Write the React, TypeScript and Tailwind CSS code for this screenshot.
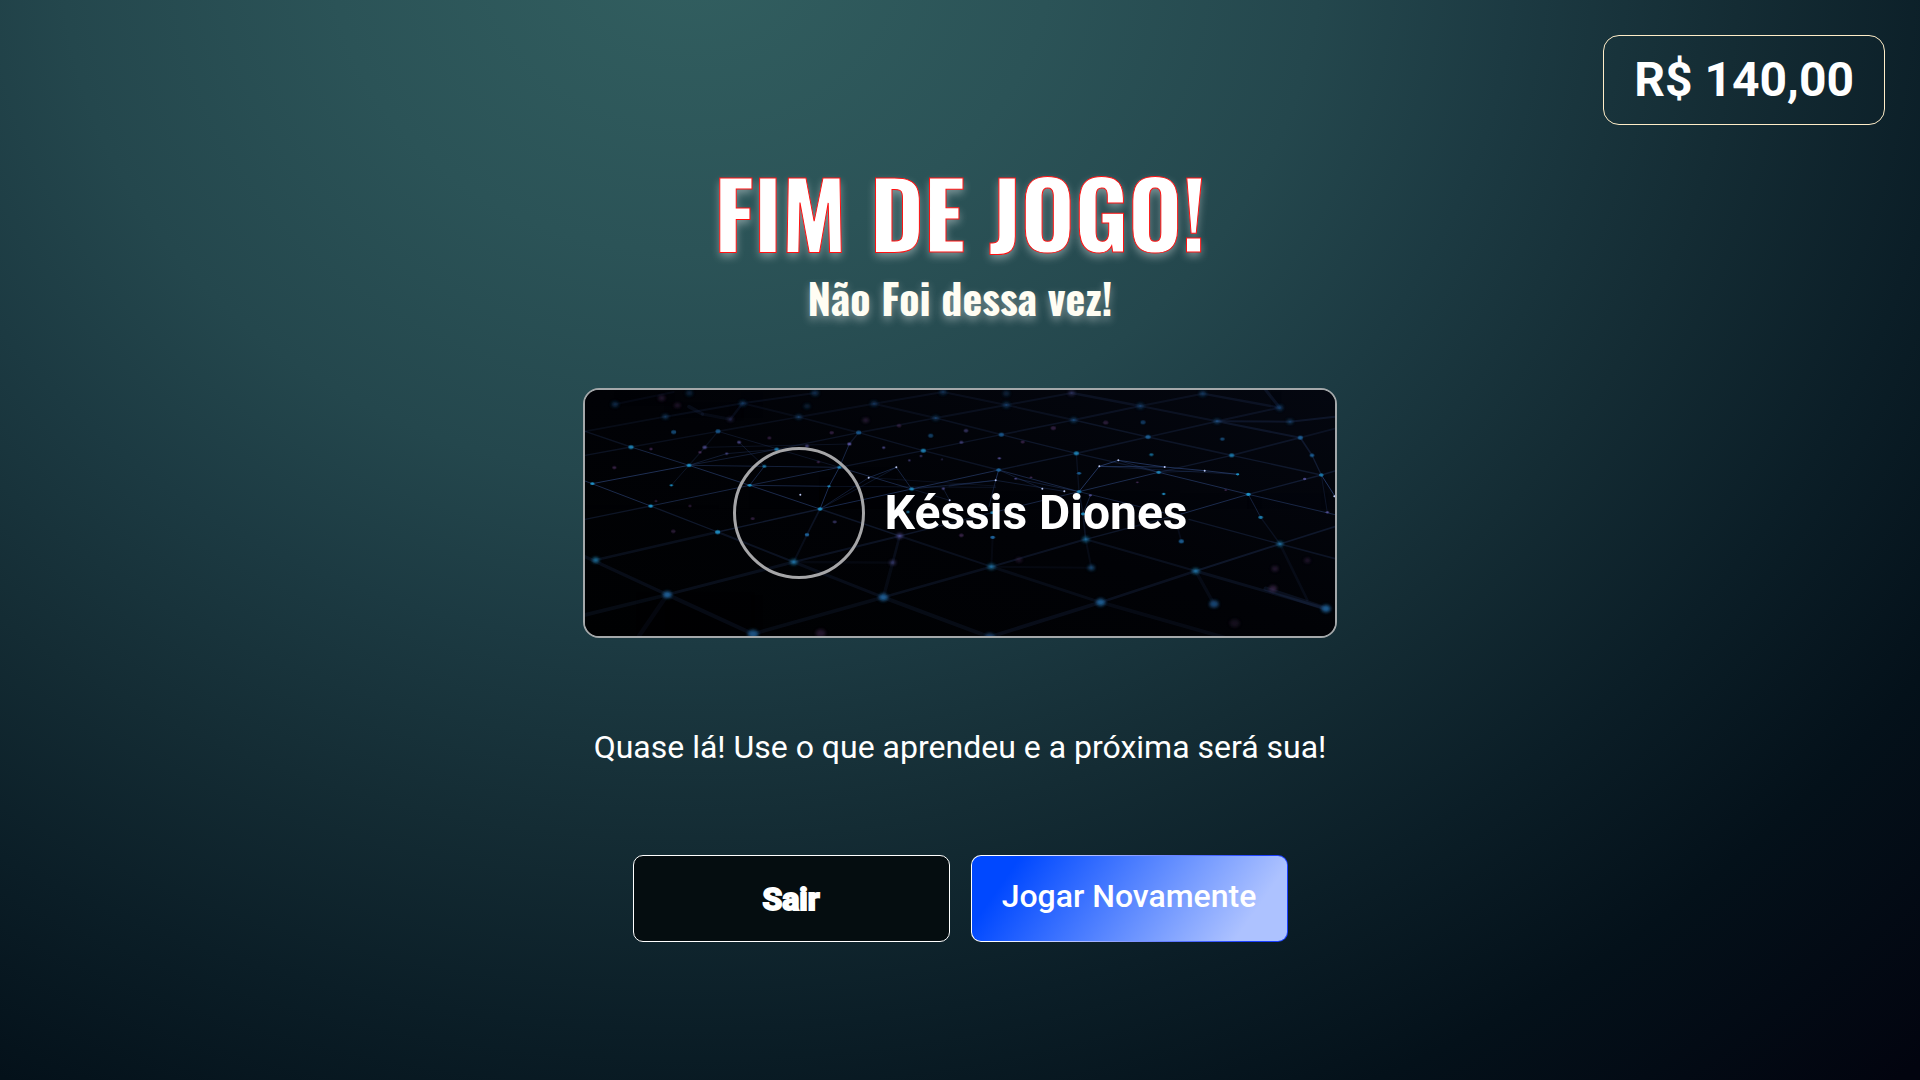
type Node = [x: number, y: number, r: number, color: string, opacity: number];
type Edge = [x1: number, y1: number, x2: number, y2: number, width: number, opacity: number];

const CYAN = "#1f8fc4";
const BLUE = "#1d5f96";
const DEEP = "#184a7a";
const VIOLET = "#5a55a0";
const PLUM = "#4a2f5c";

const nodes: Node[] = [
  [138, 103, 9, DEEP, 0.6], [361, 69, 9, DEEP, 0.5], [521, 100, 9, DEEP, 0.7], [738, 69, 10, DEEP, 0.6],
  [915, 101, 9, DEEP, 0.6], [1122, 66, 9, DEEP, 0.6], [714, 109, 8, DEEP, 0.5], [289, 140, 8, BLUE, 0.6],
  [689, 141, 8, BLUE, 0.6], [1100, 144, 8, BLUE, 0.6], [314, 186, 7, BLUE, 0.7], [447, 184, 7, BLUE, 0.8],
  [869, 188, 7, BLUE, 0.8], [1085, 197, 7, BLUE, 0.6], [186, 231, 7, CYAN, 0.8], [407, 232, 6, VIOLET, 0.7],
  [623, 238, 6, CYAN, 0.8], [1063, 242, 7, CYAN, 0.8], [360, 286, 6, CYAN, 1], [586, 289, 5, CYAN, 0.8],
  [811, 292, 5, CYAN, 0.9], [542, 346, 5, CYAN, 1], [307, 346, 4, CYAN, 0.9], [70, 341, 5, CYAN, 1],
  [780, 349, 4, CYAN, 0.9], [753, 417, 6, CYAN, 1], [1028, 357, 6, CYAN, 0.9], [245, 408, 6, CYAN, 1],
  [446, 486, 7, CYAN, 0.9], [714, 494, 6, BLUE, 1], [992, 498, 8, VIOLET, 0.9], [80, 570, 9, CYAN, 0.8],
  [674, 576, 9, CYAN, 0.8], [971, 578, 8, VIOLET, 0.6], [295, 674, 12, BLUE, 1], [943, 682, 13, BLUE, 1],
  [552, 792, 15, BLUE, 0.9], [755, 790, 14, PLUM, 0.5], [1017, 426, 4, CYAN, 0.8],
  [1312, 105, 9, DEEP, 0.7], [1312, 70, 9, DEEP, 0.5], [1508, 69, 9, VIOLET, 0.4], [1714, 108, 9, DEEP, 0.7],
  [1901, 71, 9, DEEP, 0.7], [2132, 113, 9, DEEP, 0.8], [1514, 150, 8, BLUE, 0.7], [1722, 157, 7, DEEP, 0.7],
  [1944, 154, 8, BLUE, 0.7], [2163, 155, 8, BLUE, 0.6], [1297, 194, 7, BLUE, 0.8], [1737, 201, 7, BLUE, 0.9],
  [1960, 207, 6, BLUE, 0.7], [2194, 203, 7, BLUE, 0.9], [1522, 250, 7, CYAN, 0.8], [1747, 254, 5, CYAN, 0.7],
  [1988, 256, 7, CYAN, 0.7], [2229, 256, 6, BLUE, 0.9], [1289, 300, 6, BLUE, 1], [1530, 310, 5, BLUE, 0.9],
  [1769, 307, 6, CYAN, 0.8], [2257, 315, 6, CYAN, 0.7], [1784, 372, 4, CYAN, 0.9], [2006, 313, 4, CYAN, 1],
  [1530, 365, 6, CYAN, 0.8], [2038, 373, 6, CYAN, 1], [2075, 442, 6, CYAN, 0.8], [1271, 502, 6, BLUE, 1],
  [1270, 428, 5, CYAN, 0.9], [1550, 508, 9, CYAN, 0.7], [1542, 432, 5, CYAN, 0.9], [1837, 514, 7, BLUE, 0.9],
  [2133, 522, 8, CYAN, 0.8], [1267, 590, 10, CYAN, 0.7], [1567, 593, 9, BLUE, 0.8], [1880, 603, 10, CYAN, 0.7],
  [1595, 697, 13, BLUE, 1], [1935, 702, 13, DEEP, 1], [2271, 716, 13, BLUE, 1], [1262, 801, 14, DEEP, 0.8],
  [484, 148, 8, VIOLET, 0.35], [278, 84, 9, PLUM, 0.5], [325, 106, 8, PLUM, 0.5], [246, 237, 4, PLUM, 0.9],
  [393, 247, 4, PLUM, 0.9], [473, 251, 4, VIOLET, 0.7], [510, 217, 5, VIOLET, 0.7], [601, 204, 5, PLUM, 0.6],
  [714, 228, 5, VIOLET, 0.6], [788, 188, 6, PLUM, 0.6], [890, 151, 8, PLUM, 0.6], [841, 222, 5, VIOLET, 1],
  [944, 233, 4, VIOLET, 0.8], [136, 293, 5, PLUM, 0.7], [261, 393, 3, PLUM, 0.8], [313, 484, 6, PLUM, 0.5],
  [551, 446, 5, PLUM, 0.6], [797, 456, 5, VIOLET, 0.5], [748, 276, 4, PLUM, 0.8], [990, 167, 6, PLUM, 0.5],
  [1021, 271, 3, VIOLET, 0.8], [1056, 258, 3, VIOLET, 0.7], [1119, 268, 2, VIOLET, 0.9], [1177, 217, 5, VIOLET, 0.6],
  [1191, 182, 6, VIOLET, 0.5], [1123, 356, 4, VIOLET, 0.8], [1177, 496, 6, PLUM, 0.7], [1291, 265, 4, VIOLET, 0.8],
  [1361, 216, 5, PLUM, 0.7], [1453, 174, 7, PLUM, 0.6], [1610, 158, 7, PLUM, 0.5], [1340, 326, 3, VIOLET, 0.8],
  [1386, 322, 3, PLUM, 0.9], [1564, 376, 4, VIOLET, 0.8], [1350, 570, 8, PLUM, 0.5], [1705, 337, 3, PLUM, 0.8],
  [1970, 360, 3, PLUM, 0.9], [2207, 327, 4, VIOLET, 0.8], [2275, 427, 4, VIOLET, 0.9], [2215, 571, 8, PLUM, 0.5],
  [2118, 596, 9, PLUM, 0.5], [2112, 656, 11, PLUM, 0.7], [1997, 760, 14, PLUM, 0.3], [363, 408, 4, PLUM, 0.6],
];

const sparks: [number, number][] = [
  [982, 292], [899, 323], [694, 374], [1280, 331], [1486, 364], [1591, 289], [1648, 271], [1787, 291],
  [1907, 302], [1142, 391], [1420, 356], [2296, 379],
];

const edges: Edge[] = [
  [48, 184, 186, 231, 3, 0.5], [186, 231, 360, 286, 2, 0.7], [360, 286, 542, 346, 2, 0.8], [542, 346, 753, 417, 2, 0.8],
  [753, 417, 992, 498, 3, 0.6], [992, 498, 1267, 590, 5, 0.4], [1267, 590, 1595, 697, 8, 0.3], [1595, 697, 2000, 812, 10, 0.25],
  [70, 341, 360, 286, 2, 0.9], [360, 286, 623, 238, 2, 0.5], [623, 238, 869, 188, 3, 0.5], [869, 188, 1100, 144, 4, 0.4],
  [1100, 144, 1312, 105, 5, 0.35], [1312, 105, 1508, 69, 5, 0.35],
  [48, 256, 186, 231, 3, 0.5], [186, 231, 447, 184, 3, 0.4], [447, 184, 689, 141, 4, 0.35], [689, 141, 915, 101, 5, 0.3],
  [915, 101, 1122, 66, 5, 0.3], [48, 184, 289, 140, 4, 0.3], [289, 140, 521, 100, 5, 0.3], [521, 100, 738, 69, 5, 0.3],
  [48, 333, 245, 408, 2, 0.8], [245, 408, 446, 486, 3, 0.7], [446, 486, 674, 576, 5, 0.5], [674, 576, 943, 682, 8, 0.35],
  [943, 682, 1262, 801, 11, 0.3], [48, 448, 245, 408, 3, 0.6], [245, 408, 542, 346, 2, 0.7], [542, 346, 811, 292, 2, 0.7],
  [811, 292, 1063, 242, 3, 0.6], [1063, 242, 1297, 194, 3, 0.5], [1297, 194, 1514, 150, 4, 0.45], [1514, 150, 1714, 108, 5, 0.4],
  [1714, 108, 1901, 71, 5, 0.35], [48, 560, 295, 674, 9, 0.35], [295, 674, 552, 792, 11, 0.3],
  [80, 570, 446, 486, 6, 0.4], [446, 486, 753, 417, 3, 0.7], [753, 417, 1028, 357, 2, 0.8], [1028, 357, 1289, 300, 2, 0.8],
  [1289, 300, 1522, 250, 3, 0.6], [1522, 250, 1737, 201, 4, 0.5], [1737, 201, 1944, 154, 4, 0.45], [1944, 154, 2132, 113, 5, 0.4],
  [48, 735, 295, 674, 10, 0.3], [295, 674, 674, 576, 8, 0.4], [674, 576, 992, 498, 5, 0.5], [992, 498, 1270, 428, 3, 0.6],
  [1270, 428, 1530, 365, 2, 0.7], [1530, 365, 1769, 307, 2, 0.8], [1769, 307, 1988, 256, 3, 0.6], [1988, 256, 2194, 203, 4, 0.5],
  [2194, 203, 2298, 176, 4, 0.4], [552, 792, 943, 682, 10, 0.3], [943, 682, 1267, 590, 7, 0.4], [1267, 590, 1550, 508, 5, 0.5],
  [1550, 508, 1837, 432, 3, 0.6], [1837, 432, 2038, 373, 2, 0.8], [2038, 373, 2257, 315, 3, 0.7], [2257, 315, 2298, 303, 3, 0.6],
  [1262, 801, 1595, 697, 10, 0.35], [1595, 697, 1880, 603, 7, 0.45], [1880, 603, 2133, 522, 5, 0.6], [2133, 522, 2298, 470, 4, 0.6],
  [138, 103, 314, 66, 5, 0.2], [521, 100, 689, 141, 5, 0.25], [689, 141, 869, 188, 4, 0.35], [869, 188, 1063, 242, 3, 0.5],
  [1063, 242, 1289, 300, 3, 0.5], [1289, 300, 1530, 365, 2, 0.7], [1530, 365, 1800, 432, 2, 0.6], [1860, 448, 2133, 522, 3, 0.6],
  [2133, 522, 2298, 566, 4, 0.5], [915, 101, 1100, 144, 5, 0.3], [1100, 144, 1297, 194, 4, 0.4], [1297, 194, 1522, 250, 3, 0.6],
  [1522, 250, 1769, 307, 3, 0.6], [1769, 307, 2038, 373, 2, 0.8], [2038, 373, 2298, 434, 2, 0.7],
  [1122, 66, 1312, 105, 5, 0.3], [1312, 105, 1514, 150, 5, 0.35], [1514, 150, 1737, 201, 4, 0.5], [1737, 201, 1988, 256, 4, 0.5],
  [1988, 256, 2257, 315, 3, 0.6], [1508, 69, 1714, 108, 6, 0.4], [1714, 108, 1944, 154, 5, 0.4], [1944, 154, 2194, 203, 5, 0.5],
  [1944, 154, 2163, 155, 5, 0.5], [2163, 155, 2298, 140, 5, 0.5], [1901, 71, 2132, 113, 6, 0.4], [2090, 60, 2132, 113, 8, 0.4],
  [1267, 590, 1567, 593, 5, 0.2], [1550, 508, 1880, 603, 5, 0.4], [1880, 603, 2271, 716, 8, 0.4], [2090, 656, 2271, 716, 12, 0.4],
  [360, 286, 811, 292, 2, 0.6], [542, 346, 780, 349, 2, 0.7], [780, 349, 1280, 352, 1, 0.5], [360, 286, 473, 251, 2, 0.5],
  [360, 286, 407, 232, 3, 0.4], [407, 232, 447, 184, 3, 0.35], [307, 346, 360, 286, 2, 0.35], [542, 346, 586, 289, 2, 0.7],
  [510, 217, 586, 289, 2, 0.4], [447, 184, 811, 292, 2, 0.35], [407, 232, 841, 222, 2, 0.3], [473, 251, 623, 238, 2, 0.4],
  [753, 417, 780, 349, 2, 0.9], [780, 349, 811, 292, 2, 0.9], [811, 292, 841, 222, 2, 0.7], [841, 222, 869, 188, 3, 0.5],
  [753, 417, 899, 323, 1, 0.8], [899, 323, 982, 292, 1, 1], [982, 292, 1028, 357, 1, 1], [753, 417, 982, 292, 1, 0.6],
  [811, 292, 1028, 357, 2, 0.7], [899, 323, 1280, 348, 1, 0.4], [753, 417, 714, 494, 4, 0.5], [714, 494, 674, 576, 5, 0.35],
  [992, 498, 971, 578, 7, 0.35], [971, 578, 943, 682, 9, 0.25], [674, 576, 971, 578, 6, 0.2], [1028, 357, 1142, 391, 1, 0.6],
  [1123, 356, 1142, 391, 1, 0.7], [1028, 357, 1280, 331, 1, 0.8], [1140, 348, 1280, 331, 1, 0.8], [1280, 331, 1289, 300, 2, 0.9],
  [1280, 331, 1260, 410, 1, 0.8], [1289, 300, 1420, 356, 1, 0.7], [1280, 331, 1486, 364, 1, 0.7], [1340, 326, 1530, 365, 1, 0.8],
  [1530, 365, 1591, 289, 2, 1], [1591, 289, 1648, 271, 2, 1], [1648, 271, 1769, 307, 1, 0.8], [1648, 271, 1787, 291, 2, 0.9],
  [1591, 289, 1787, 291, 2, 0.8], [1787, 291, 1907, 302, 2, 0.9], [1907, 302, 2006, 313, 2, 0.9], [1591, 289, 2006, 313, 1, 0.6],
  [1769, 307, 1907, 302, 1, 0.6], [1522, 250, 1530, 365, 3, 0.4], [1530, 365, 1542, 432, 3, 0.6], [1542, 432, 1550, 508, 4, 0.5],
  [1564, 376, 1542, 432, 2, 0.6], [1550, 508, 1567, 593, 5, 0.25], [1271, 502, 1267, 590, 5, 0.2], [2038, 373, 2075, 442, 2, 0.6],
  [2075, 442, 2133, 522, 3, 0.4], [2133, 522, 2215, 690, 7, 0.25], [1880, 603, 1935, 702, 9, 0.25], [2194, 203, 2229, 256, 4, 0.6],
  [2229, 256, 2257, 315, 3, 0.7], [2257, 315, 2298, 379, 2, 1], [2257, 315, 2275, 427, 1, 0.5], [295, 674, 210, 798, 12, 0.2],
  [521, 100, 484, 148, 6, 0.3], [360, 110, 400, 132, 10, 0.3], [400, 132, 484, 148, 8, 0.25], [1820, 450, 1837, 514, 4, 0.3],
];

function edgeOpacity(width: number, opacity: number) {
  return width <= 2 ? opacity * 0.65 : opacity * 0.42;
}

function NetworkBackdrop() {
  return (
    <svg aria-hidden="true" viewBox="48 60 2250 738" preserveAspectRatio="xMidYMid slice" className="absolute inset-0 h-full w-full">
      <defs>
        <linearGradient id="night" x1="0" y1="1" x2="1" y2="0">
          <stop offset="0" stopColor="#000102" />
          <stop offset="0.5" stopColor="#010206" />
          <stop offset="1" stopColor="#040710" />
        </linearGradient>
        <filter id="soft" x="-5%" y="-5%" width="110%" height="110%">
          <feGaussianBlur stdDeviation="2" />
        </filter>
        <filter id="softer" x="-5%" y="-5%" width="110%" height="110%">
          <feGaussianBlur stdDeviation="4" />
        </filter>
      </defs>
      <rect x="48" y="60" width="2250" height="738" fill="url(#night)" />
      <g stroke="#34508c" strokeLinecap="round">
        {edges.map(([x1, y1, x2, y2, width, opacity], i) => (
          <line key={i} x1={x1} y1={y1} x2={x2} y2={y2} strokeWidth={width + 1} opacity={edgeOpacity(width, opacity)} />
        ))}
      </g>
      <g filter="url(#soft)">
        {nodes
          .filter((n) => n[2] < 8)
          .map(([x, y, r, color, opacity], i) => (
            <ellipse key={i} cx={x} cy={y} rx={r + 1} ry={r * 0.85} fill={color} opacity={opacity} />
          ))}
      </g>
      <g filter="url(#softer)">
        {nodes
          .filter((n) => n[2] >= 8)
          .map(([x, y, r, color, opacity], i) => (
            <ellipse key={i} cx={x} cy={y} rx={r + 1} ry={r * 0.85} fill={color} opacity={opacity * 0.9} />
          ))}
      </g>
      {sparks.map(([x, y], i) => (
        <circle key={i} cx={x} cy={y} r="3" fill="#b9c6f2" />
      ))}
    </svg>
  );
}

export default function App() {
  return (
    <div className="flex min-h-screen flex-col bg-[#02040f] bg-[radial-gradient(ellipse_78%_118%_at_36%_-5%,#325f60_0%,#2b5357_24%,#24474d_42%,#1c3a42_55%,#142c34_70%,#0b1e27_85%,#04111a_100%,#02040f_120%)] font-['Roboto',sans-serif] text-white">
      <header className="flex justify-end px-[35px] pt-[35px]">
        <p className="rounded-2xl border border-[#ffedc8] px-[30px] py-4 text-5xl leading-[56px] font-bold">R$ 140,00</p>
      </header>

      <main className="flex flex-col items-center px-6 pb-12 text-center">
        <h1 className="mt-[34px] font-['Oswald','Roboto_Condensed',sans-serif] text-[92px] leading-[104px] font-bold [-webkit-text-stroke:1px_#ff1010] [text-shadow:0_4px_8px_rgba(255,255,255,0.4)]">
          FIM DE JOGO!
        </h1>
        <p className="mt-2 font-['Oswald','Roboto_Condensed',sans-serif] text-[42px] leading-[52px] font-bold text-[#fffdf3] [text-shadow:0_4px_8px_rgba(255,255,255,0.4)]">
          Não Foi dessa vez!
        </p>

        <section className="relative mt-[65px] flex h-[250px] w-full max-w-[754px] items-center justify-center overflow-hidden rounded-2xl border-2 border-[#a4a8aa] bg-[#010206]">
          <NetworkBackdrop />
          <div className="relative flex items-center gap-5">
            <div className="size-[132px] rounded-full border-3 border-[#a6a6a8]" />
            <h2 className="text-5xl leading-[56px] font-bold">Késsis Diones</h2>
          </div>
        </section>

        <p className="mt-[90px] text-[32px] leading-[38px]">Quase lá! Use o que aprendeu e a próxima será sua!</p>

        <div className="mt-[89px] flex flex-wrap justify-center gap-[21px]">
          <button type="button" className="h-[87px] w-[317px] rounded-[10px] border border-white bg-[#050d10] text-[32px] leading-[38px] font-bold [-webkit-text-stroke:2px_#ffffff]">
            Sair
          </button>
          <button
            type="button"
            className="h-[87px] w-[317px] rounded-[10px] border border-transparent pb-1.5 text-[32px] leading-[38px] font-medium [background:linear-gradient(125deg,#0048ff_13%,#adc2ff_86%)_padding-box,linear-gradient(100deg,#ffffff_10%,#1c40ff_88%)_border-box]"
          >
            Jogar Novamente
          </button>
        </div>
      </main>
    </div>
  );
}
